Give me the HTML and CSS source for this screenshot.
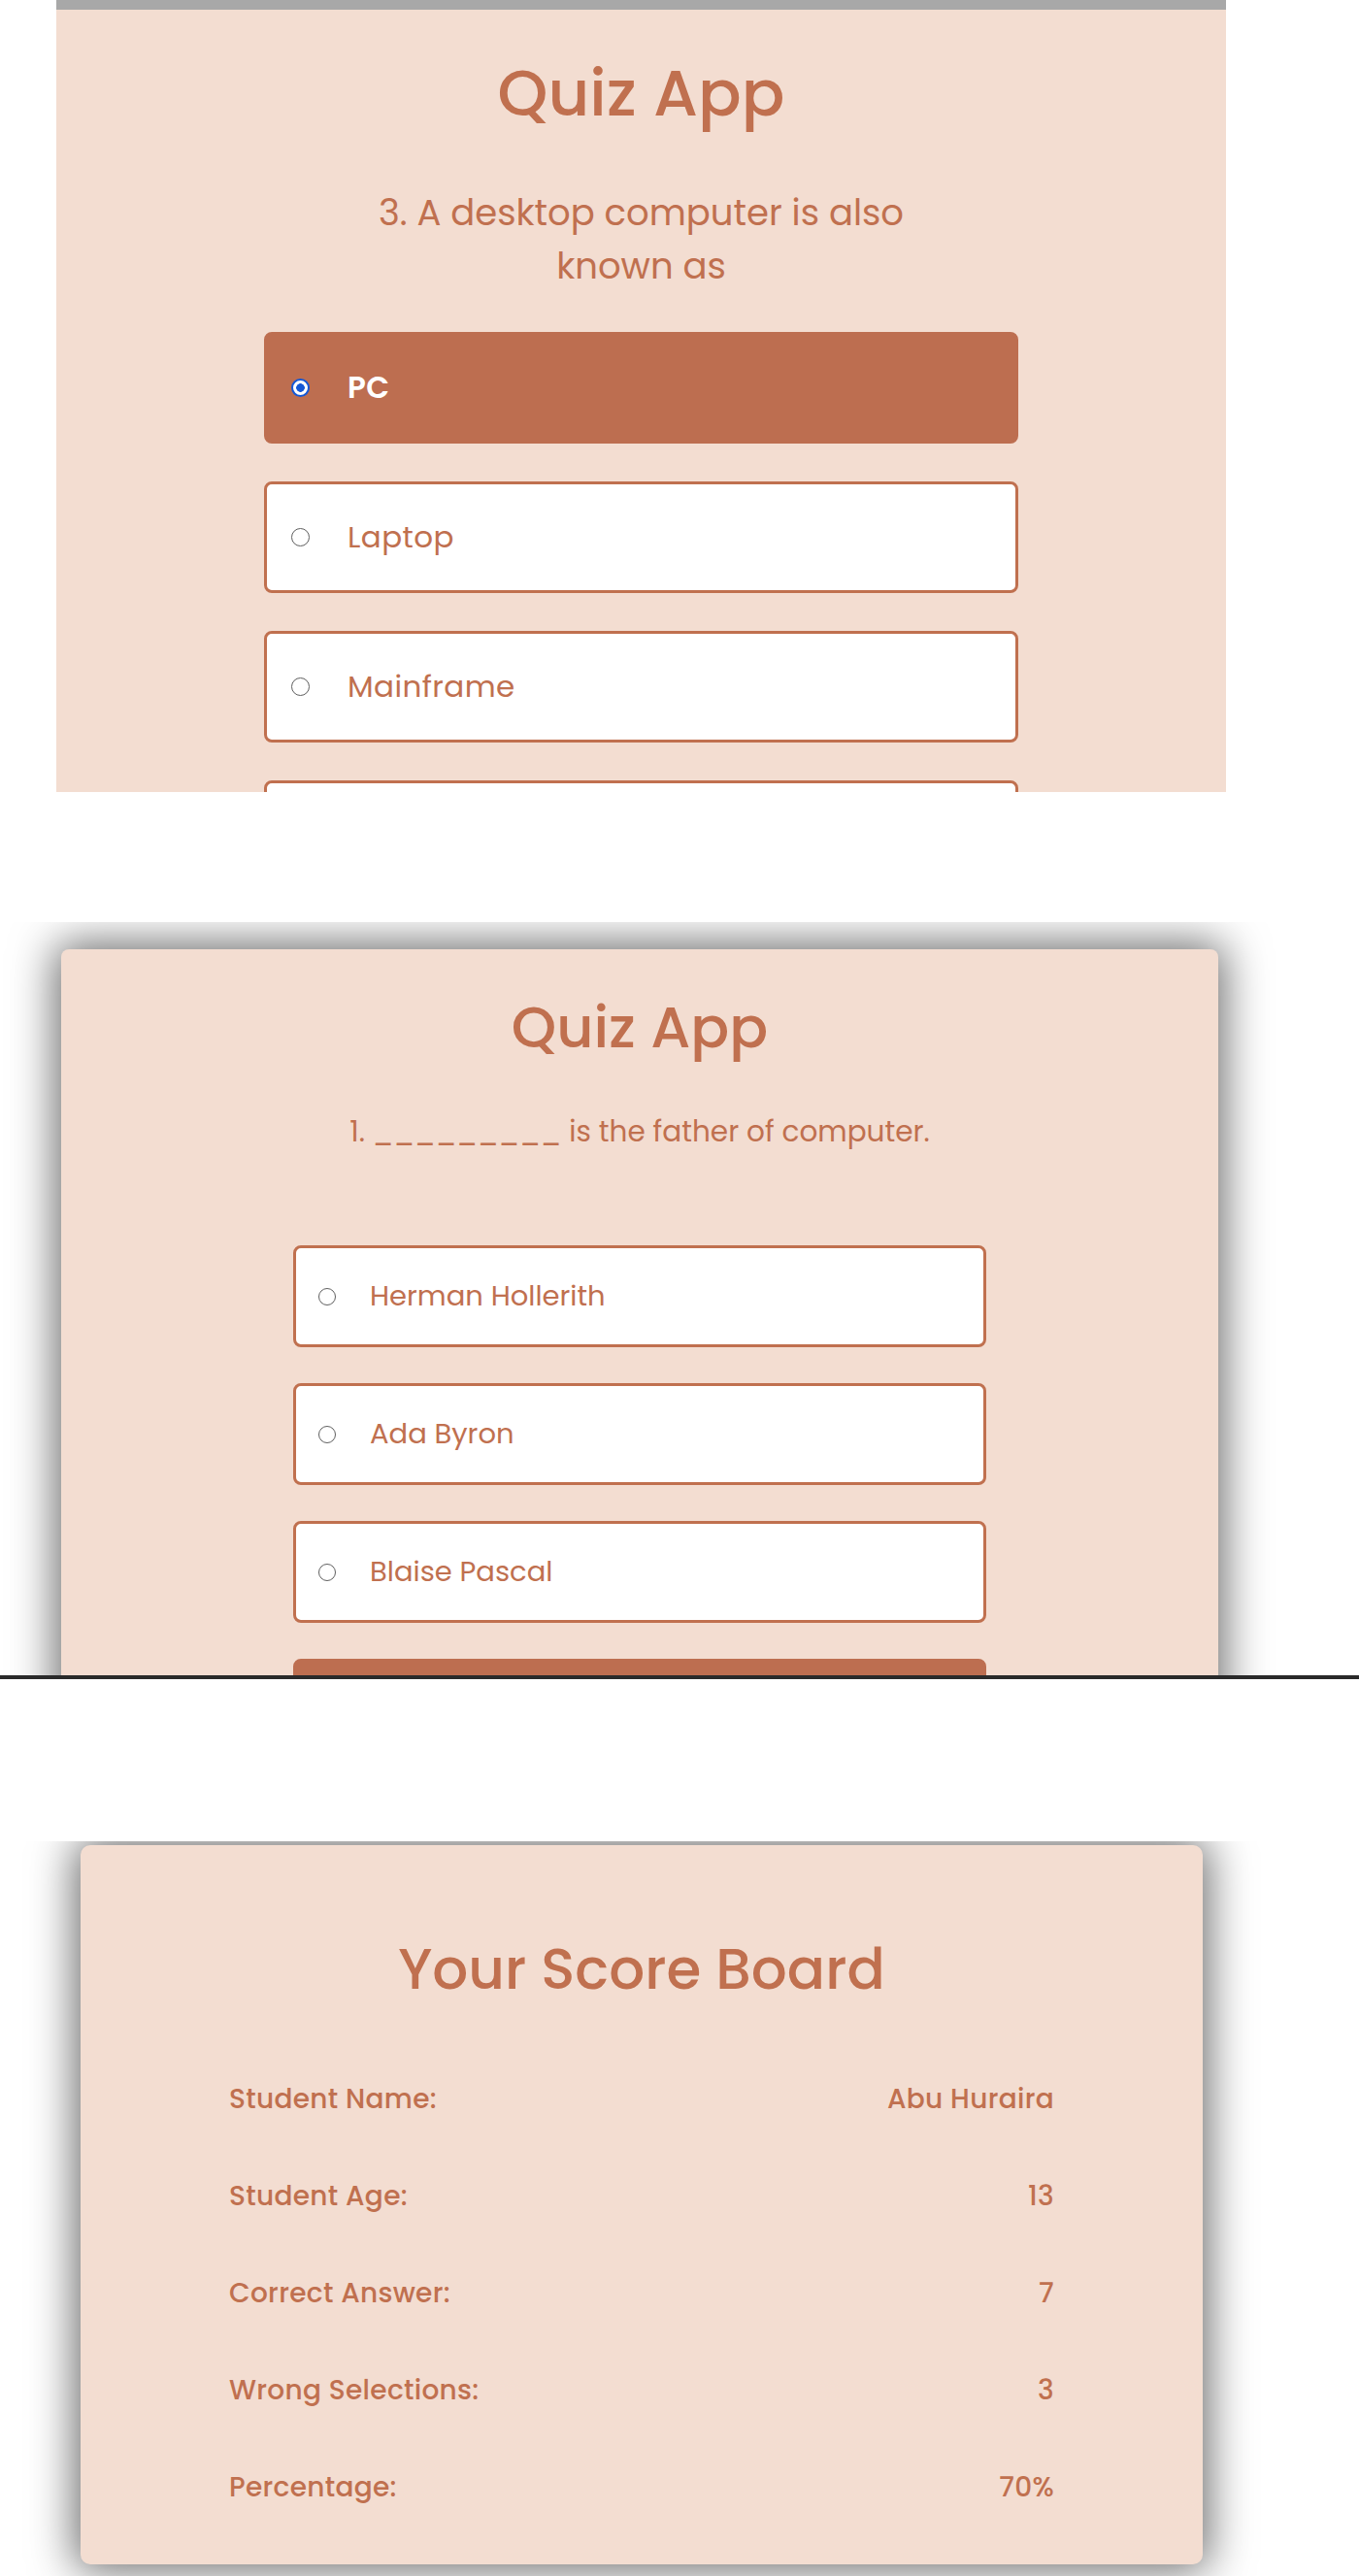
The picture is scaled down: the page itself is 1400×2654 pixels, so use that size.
FILE: index.html
```html
<!DOCTYPE html>
<html lang="en">
<head>
<meta charset="utf-8">
<title>Quiz App</title>
<link rel="stylesheet" href="styles.css">
</head>
<body>
  <section class="shot shot-one">
    <div class="quiz quiz-large">
      <h1 class="quiz-title">Quiz App</h1>
      <p class="question">3. A desktop computer is also known as</p>
      <div class="options">
        <label class="option selected"><input type="radio" name="q3" checked><span>PC</span></label>
        <label class="option"><input type="radio" name="q3"><span>Laptop</span></label>
        <label class="option"><input type="radio" name="q3"><span>Mainframe</span></label>
        <label class="option"><input type="radio" name="q3"></label>
      </div>
    </div>
  </section>

  <section class="shot shot-two">
    <div class="quiz quiz-card">
      <h1 class="quiz-title">Quiz App</h1>
      <p class="question">1. _________ is the father of computer.</p>
      <div class="options">
        <label class="option"><input type="radio" name="q1"><span>Herman Hollerith</span></label>
        <label class="option"><input type="radio" name="q1"><span>Ada Byron</span></label>
        <label class="option"><input type="radio" name="q1"><span>Blaise Pascal</span></label>
        <label class="option selected"><input type="radio" name="q1"></label>
      </div>
    </div>
  </section>

  <section class="shot shot-three">
    <div class="scoreboard">
      <h1 class="score-title">Your Score Board</h1>
      <div class="score-rows">
        <div class="score-row"><span>Student Name:</span><span>Abu Huraira</span></div>
        <div class="score-row"><span>Student Age:</span><span>13</span></div>
        <div class="score-row"><span>Correct Answer:</span><span>7</span></div>
        <div class="score-row"><span>Wrong Selections:</span><span>3</span></div>
        <div class="score-row"><span>Percentage:</span><span>70%</span></div>
      </div>
    </div>
  </section>
</body>
</html>
```

FILE: styles.css
```css
* { box-sizing: border-box; }

body {
  margin: 0;
  background: #ffffff;
  font-family: "Poppins", "Inter", "Noto Sans", sans-serif;
  color: #bf6e4f;
}

.shot { overflow: hidden; }

/* ---------- shot one ---------- */
.shot-one {
  margin-left: 58px;
  width: 1205px;
  height: 816px;
  border-top: 10px solid #a8a8a8;
  background: #f3ddd1;
}

.quiz {
  display: flex;
  flex-direction: column;
  align-items: center;
  background: #f3ddd1;
}

.quiz-title {
  margin: 0;
  font-weight: 500;
  color: #c0704f;
}

.question {
  margin: 0;
  text-align: center;
  font-weight: 400;
  color: #c0704f;
}

.options {
  display: flex;
  flex-direction: column;
}

.option {
  display: flex;
  align-items: center;
  border: 3px solid #c0704f;
  border-radius: 8px;
  background: #ffffff;
  color: #c0704f;
}

.option input {
  -webkit-appearance: none;
  appearance: none;
  margin: 0;
  flex: none;
  border-radius: 50%;
  border: 1.5px solid #5f5f5f;
  background: #ffffff;
}

.option input:checked {
  border: 2px solid #1558d6;
  background: radial-gradient(circle, #1558d6 0 4px, #ffffff 4.6px);
}

.option.selected {
  background: #bd6e50;
  border-color: #bd6e50;
  color: #ffffff;
  font-weight: 600;
}

.quiz-large .quiz-title {
  margin-top: 46px;
  font-size: 66px;
  line-height: 80px;
}

.quiz-large .question {
  margin-top: 56px;
  max-width: 600px;
  font-size: 37px;
  line-height: 55px;
}

.quiz-large .options {
  margin-top: 40px;
  gap: 39px;
}

.quiz-large .option {
  width: 777px;
  height: 115px;
  padding-left: 25px;
  gap: 39px;
  font-size: 31px;
  letter-spacing: 0.4px;
}

.quiz-large .option input {
  width: 19px;
  height: 19px;
}

/* ---------- shot two ---------- */
.shot-two {
  margin-top: 134px;
  height: 780px;
  border-bottom: 4px solid #2a2a2a;
  padding-top: 28px;
}

.quiz-card {
  margin-left: 63px;
  width: 1192px;
  height: 900px;
  border-radius: 8px;
  box-shadow: 0 0 45px 6px rgba(0, 0, 0, 0.58);
}

.quiz-card .quiz-title {
  margin-top: 43px;
  font-size: 59px;
  line-height: 75px;
}

.quiz-card .question {
  margin-top: 50px;
  font-size: 29.5px;
  line-height: 40px;
}

.quiz-card .options {
  margin-top: 97px;
  gap: 37px;
}

.quiz-card .option {
  width: 714px;
  height: 105px;
  padding-left: 23px;
  gap: 35px;
  font-size: 29px;
}

.quiz-card .option input {
  width: 18px;
  height: 18px;
}

/* ---------- shot three ---------- */
.shot-three {
  margin-top: 167px;
  height: 757px;
  padding-top: 4px;
}

.scoreboard {
  margin-left: 83px;
  width: 1156px;
  height: 741px;
  border-radius: 10px;
  background: #f3ddd1;
  box-shadow: 0 0 45px 6px rgba(0, 0, 0, 0.58);
  display: flex;
  flex-direction: column;
}

.score-title {
  margin: 93px 0 0;
  text-align: center;
  font-size: 58px;
  line-height: 70px;
  font-weight: 500;
  color: #c0704f;
}

.score-rows {
  margin-top: 79px;
  padding: 0 153px;
  display: flex;
  flex-direction: column;
  gap: 60px;
}

.score-row {
  display: flex;
  justify-content: space-between;
  font-size: 28px;
  line-height: 40px;
  font-weight: 500;
  letter-spacing: 0.3px;
  color: #c0704f;
}
```
